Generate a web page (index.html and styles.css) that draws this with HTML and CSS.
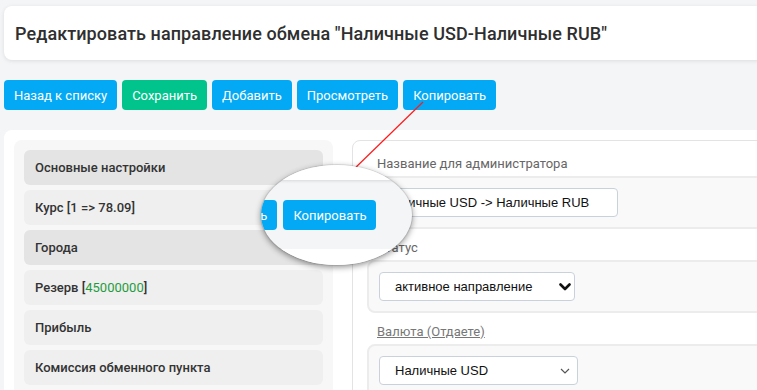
FILE: index.html
```html
<!DOCTYPE html>
<html lang="ru">
<head>
  <meta charset="UTF-8">
  <meta name="viewport" content="width=device-width, initial-scale=1.0">
  <title>Редактировать направление обмена</title>
  <link rel="stylesheet" href="styles.css">
</head>
<body>
  <div class="page">
    <header class="head-card">
      <h1>Редактировать направление обмена "Наличные USD-Наличные RUB"</h1>
    </header>

    <div class="toolbar">
      <button class="btn">Назад к списку</button>
      <button class="btn btn-green">Сохранить</button>
      <button class="btn">Добавить</button>
      <button class="btn">Просмотреть</button>
      <button class="btn">Копировать</button>
    </div>

    <div class="main-card">
      <div class="menu">
        <div class="menu-item dark">Основные настройки</div>
        <div class="menu-item">Курс [1 =&gt; 78.09]</div>
        <div class="menu-item dark">Города</div>
        <div class="menu-item">Резерв [<span class="green">45000000</span>]</div>
        <div class="menu-item">Прибыль</div>
        <div class="menu-item">Комиссия обменного пункта</div>
      </div>

      <div class="form">
        <div class="label">Название для администратора</div>
        <div class="row">
          <input class="field field-text" type="text" value="Наличные USD -> Наличные RUB">
        </div>

        <div class="label">Статус</div>
        <div class="row">
          <div class="field select select-1">
            <span>активное направление</span>
            <svg width="12" height="8" viewBox="0 0 12 8"><path d="M1.5 1.5 L6 6 L10.5 1.5" fill="none" stroke="#111" stroke-width="2.6" stroke-linecap="round" stroke-linejoin="round"/></svg>
          </div>
        </div>

        <div class="label"><a href="#" class="link">Валюта (Отдаете)</a></div>
        <div class="row">
          <div class="field select select-2">
            <span>Наличные USD</span>
            <svg width="10" height="6" viewBox="0 0 10 6"><path d="M1 1 L5 5 L9 1" fill="none" stroke="#555" stroke-width="1.2"/></svg>
          </div>
        </div>
      </div>
    </div>
  </div>

  <!-- callout line from the toolbar button to the zoom lens -->
  <svg class="pointer" width="757" height="390" viewBox="0 0 757 390">
    <line x1="423" y1="102" x2="352" y2="171" stroke="#ff1a1a" stroke-width="1.2"/>
  </svg>

  <div class="lens">
    <div class="lens-head"></div>
    <div class="lens-bar">
      <span class="btn">Просмотреть</span>
      <span class="btn">Копировать</span>
    </div>
    <div class="lens-card"></div>
  </div>
</body>
</html>
```

FILE: styles.css
```css
body {
  margin: 0;
  background: #f4f5f7;
  font-family: Roboto, "Noto Sans", sans-serif;
  color: #333;
  overflow: hidden;
}
.page {
  width: 1000px;
  padding: 6px 0 0 4px;
}
.head-card {
  height: 54px;
  display: flex;
  align-items: center;
  padding-left: 11px;
  background: #fff;
  border-radius: 8px;
  box-shadow: 0 1px 4px rgba(0,0,0,0.1);
}
.head-card h1 {
  margin: 0;
  font-size: 18px;
  font-weight: 500;
  letter-spacing: 0.08px;
  color: #2f2f2f;
}
.toolbar {
  display: flex;
  gap: 5px;
  margin-top: 20px;
}
.btn {
  display: inline-flex;
  align-items: center;
  height: 30px;
  padding: 0 10px;
  border: none;
  border-radius: 4px;
  background: #03a9f4;
  color: #fff;
  font-family: Roboto, sans-serif;
  font-size: 13px;
  white-space: nowrap;
  box-sizing: border-box;
}
.btn-green {
  background: #00c48c;
}
.main-card {
  display: flex;
  gap: 19px;
  margin-top: 20px;
  padding: 10px;
  height: 300px;
  background: #fff;
  border-radius: 8px;
}
.menu {
  width: 319px;
  box-sizing: border-box;
  padding: 10px;
  background: #f7f7f7;
  border-radius: 8px;
  display: flex;
  flex-direction: column;
  gap: 5px;
}
.menu-item {
  height: 35px;
  display: flex;
  align-items: center;
  padding-left: 11px;
  background: #efefef;
  border-radius: 6px;
  font-size: 13px;
  font-weight: 500;
  color: #333;
}
.menu-item.dark {
  background: #e4e4e4;
}
.green {
  color: #1f9c3e;
  font-weight: 400;
}
.form {
  flex: 1;
  padding: 4px 14px 0;
  border: 1px solid #e3e3e3;
  border-radius: 8px;
}
.label {
  padding: 9px 10px 2px;
  line-height: 20px;
  font-size: 13px;
  color: #666;
}
.link {
  color: #777;
  text-decoration: underline;
}
.row {
  padding: 10px;
  background: #f9f9f9;
  border: 2px solid #ececec;
  border-radius: 8px;
}
.field {
  height: 29px;
  box-sizing: border-box;
  border: 1px solid #c9d2dc;
  border-radius: 4px;
  background: #fff;
  font-family: "Liberation Sans", Arial, sans-serif;
  font-size: 13px;
  color: #111;
}
.field-text {
  display: block;
  width: 239px;
  padding: 0 4px;
  outline: none;
}
.select {
  display: flex;
  align-items: center;
  justify-content: space-between;
  padding: 0 3px 0 15px;
}
.select-1 {
  width: 196px;
}
.select-2 {
  width: 199px;
  padding-right: 7px;
}
.pointer {
  position: absolute;
  left: 0;
  top: 0;
  pointer-events: none;
}
.lens {
  position: absolute;
  left: 261px;
  top: 165px;
  width: 151px;
  height: 100px;
  border-radius: 50%;
  overflow: hidden;
  background: #f4f5f7;
  box-shadow: 0 2px 6px rgba(0,0,0,0.45), 0 0 0 1px rgba(0,0,0,0.08);
  display: flex;
  flex-direction: column;
}
.lens-head {
  height: 15px;
  flex: none;
  background: #fff;
  box-shadow: 0 1px 3px rgba(0,0,0,0.12);
}
.lens-bar {
  display: flex;
  gap: 6px;
  margin: 20px 0 19px -85px;
}
.lens-card {
  flex: 1;
  background: #fff;
}
```
